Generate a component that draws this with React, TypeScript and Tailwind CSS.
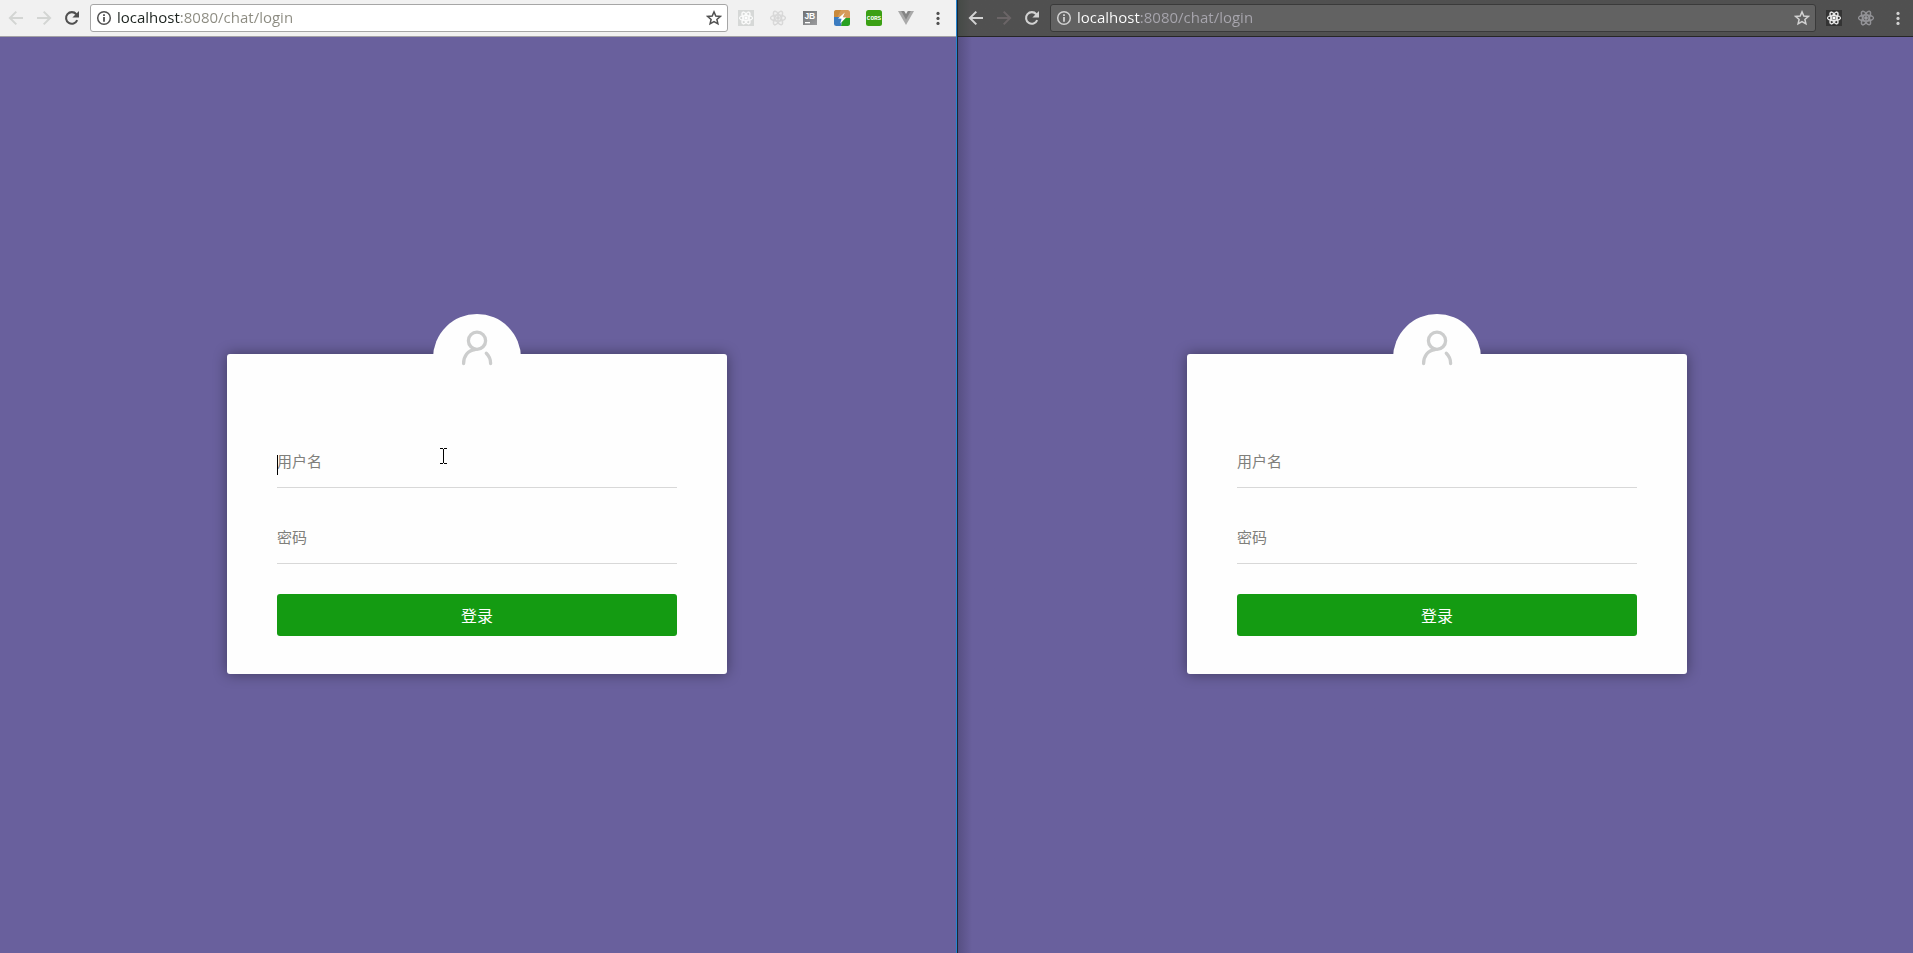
import type { ReactNode } from "react";
import { clsx } from "clsx";
import { SiReact } from "react-icons/si";

type Theme = "light" | "dark";

const ADDRESS = "localhost:8080/chat/login";

function ArrowIcon({ flip = false }: { flip?: boolean }) {
  return (
    <svg viewBox="0 0 16 16" className={clsx("size-4", flip && "-scale-x-100")} fill="none" stroke="currentColor" strokeWidth="2">
      <path d="M15 8H2.5M8.3 1.6 1.9 8l6.4 6.4" />
    </svg>
  );
}

function ReloadIcon() {
  return (
    <svg viewBox="0 0 16 16" className="size-4">
      <path d="M13.2 10.2A5.8 5.8 0 1 1 12.3 4.2" fill="none" stroke="currentColor" strokeWidth="2.1" />
      <path d="M15 1v6.6H8.4z" fill="currentColor" />
    </svg>
  );
}

function InfoIcon() {
  return (
    <svg viewBox="0 0 16 16" className="size-4 shrink-0">
      <circle cx="8" cy="8" r="6.3" fill="none" stroke="currentColor" strokeWidth="1.5" />
      <path d="M7.1 7h1.8v4.7H7.1zM7.1 4.2h1.8v1.7H7.1z" fill="currentColor" />
    </svg>
  );
}

function StarIcon() {
  return (
    <svg viewBox="0 0 16 16" className="size-4">
      <path
        d="M8 1.9l1.8 4.1 4.5.4-3.4 3 1 4.4L8 11.5l-3.9 2.3 1-4.4-3.4-3 4.5-.4z"
        fill="none"
        stroke="currentColor"
        strokeWidth="1.5"
      />
    </svg>
  );
}

function MenuIcon() {
  return (
    <svg viewBox="0 0 16 16" className="size-4" fill="currentColor">
      <circle cx="8" cy="3.4" r="1.6" />
      <circle cx="8" cy="8.4" r="1.6" />
      <circle cx="8" cy="13.4" r="1.6" />
    </svg>
  );
}

function JetBrainsIcon() {
  return (
    <svg viewBox="0 0 16 16" className="size-4">
      <defs>
        <linearGradient id="jb" x1="0" y1="0" x2="1" y2="1">
          <stop offset="0" stopColor="#6f7174" />
          <stop offset="1" stopColor="#9b9c9e" />
        </linearGradient>
      </defs>
      <path d="M1 1h14v14H1z" fill="url(#jb)" />
      <text x="2.4" y="9" fontSize="8.5" fontWeight="700" fontFamily="Liberation Sans, sans-serif" fill="#fff">
        JB
      </text>
      <path d="M3 12h5v1.3H3z" fill="#fff" />
    </svg>
  );
}

function BoltIcon() {
  return (
    <svg viewBox="0 0 16 16" className="size-4">
      <defs>
        <clipPath id="bolt-tile">
          <rect width="16" height="16" rx="2.5" />
        </clipPath>
      </defs>
      <g clipPath="url(#bolt-tile)">
        <path d="M0 0h16v8H0z" fill="#d59a5a" />
        <path d="M0 0h7L3 8H0z" fill="#c98a3c" />
        <path d="M0 7h9L7 16H0z" fill="#3b7cc0" />
        <path d="M9 8h7v8H7z" fill="#27a021" />
        <path d="M10.8 2.6 4 8.6l3.6.1-1.4 4.9 6-6.2-3.4-.1z" fill="#fff" />
      </g>
    </svg>
  );
}

function CorsIcon() {
  return (
    <svg viewBox="0 0 16 16" className="size-4">
      <rect width="16" height="16" rx="2.5" fill="#3ba014" />
      <text x="8" y="10.4" textAnchor="middle" fontSize="6" fontWeight="700" fontFamily="Liberation Mono, monospace" fill="#fff">
        CORS
      </text>
    </svg>
  );
}

function VueIcon() {
  return (
    <svg viewBox="0 0 16 16" className="size-4">
      <path d="M0 1h16L8 15z" fill="#a9a9a9" />
      <path d="M3.2 1h9.6L8 9.4z" fill="#858585" />
      <path d="M6.2 1h3.6L8 4z" fill="#f1f1f1" />
    </svg>
  );
}

function UserIcon() {
  return (
    <svg viewBox="0 0 32 36" className="h-9 w-8" fill="none" stroke="#cccdcd" strokeWidth="3.3" strokeLinecap="round">
      <circle cx="16" cy="10.7" r="8.6" />
      <path d="M2.6 33.5C2.6 26 7 20.3 14 19.6M25.3 23.2c2.8 2.6 4.3 6 4.3 10.3" />
    </svg>
  );
}

function ToolButton({ label, disabled, className, children }: { label: string; disabled?: boolean; className?: string; children: ReactNode }) {
  return (
    <button type="button" aria-label={label} disabled={disabled} className={clsx("size-4 shrink-0", className)}>
      {children}
    </button>
  );
}

function Toolbar({ theme }: { theme: Theme }) {
  const dark = theme === "dark";
  return (
    <header
      className={clsx(
        "flex h-[37px] shrink-0 items-center border-b",
        dark
          ? "border-[#262626] bg-[#505050] bg-linear-to-r from-[#454a46] from-0% to-[#505050] to-[12px] pr-[7px] pl-2.5 text-[#d2d2d2]"
          : "border-[#a3a1a6] bg-[#f1f1f1] pr-2.5 pl-2 text-[#505050]",
      )}
    >
      <nav className="flex items-center gap-3">
        <ToolButton label="Back" disabled={!dark} className={dark ? "" : "text-[#d3d5d3]"}>
          <ArrowIcon />
        </ToolButton>
        <ToolButton label="Forward" disabled className={dark ? "text-[#6b6567]" : "text-[#d3d5d3]"}>
          <ArrowIcon flip />
        </ToolButton>
        <ToolButton label="Reload">
          <ReloadIcon />
        </ToolButton>
      </nav>
      <div
        className={clsx(
          "mr-2.5 ml-2.5 flex h-7 min-w-0 flex-1 items-center gap-[5px] rounded-[3px] border px-[5px]",
          dark ? "border-[#3a3a3a] bg-[#626262]" : "border-[#a6a6a6] bg-white",
        )}
      >
        <InfoIcon />
        <input
          aria-label="Address"
          defaultValue={ADDRESS}
          className={clsx(
            "min-w-0 flex-1 bg-linear-to-r bg-clip-text pb-0.5 font-['Open_Sans','Noto_Sans',sans-serif] text-[15px] leading-5 text-transparent outline-none",
            dark ? "from-white from-[63px] to-[#a8a6ae] to-[63px]" : "from-[#1d2420] from-[63px] to-[#8b8a80] to-[63px]",
          )}
        />
        <ToolButton label="Bookmark this page">
          <StarIcon />
        </ToolButton>
      </div>
      <div className="flex items-center gap-4">
        <ToolButton
          label="React page"
          className={clsx("grid place-items-center", dark ? "bg-[#343434] text-white" : "bg-[#d6d8d7] text-white")}
        >
          <SiReact className="size-3.5 stroke-current stroke-1" />
        </ToolButton>
        <ToolButton label="React tools" className={dark ? "text-[#9a9a9e]" : "text-[#d6d6d6]"}>
          <SiReact className="size-4 stroke-current stroke-1" />
        </ToolButton>
        {!dark && (
          <>
            <ToolButton label="JetBrains">
              <JetBrainsIcon />
            </ToolButton>
            <ToolButton label="Debugger">
              <BoltIcon />
            </ToolButton>
            <ToolButton label="CORS">
              <CorsIcon />
            </ToolButton>
            <ToolButton label="Vue">
              <VueIcon />
            </ToolButton>
          </>
        )}
        <ToolButton label="Menu">
          <MenuIcon />
        </ToolButton>
      </div>
    </header>
  );
}

function Field({ id, type, label, children }: { id: string; type: string; label: string; children?: ReactNode }) {
  return (
    <div className="relative">
      <input
        id={id}
        type={type}
        aria-label={label}
        placeholder={label}
        className="block h-[52px] w-full border-b border-[#d8d8d8] bg-transparent pb-0.5 text-[15px] text-[#333] outline-none placeholder:text-[#7f7f7b]"
      />
      {children}
    </div>
  );
}

function LoginForm({ name, active }: { name: string; active: boolean }) {
  return (
    <form className="flex w-full max-w-[500px] flex-col items-center font-['Noto_Sans_CJK_SC',sans-serif]" onSubmit={(e) => e.preventDefault()}>
      <div className="z-10 -mb-12 flex size-22 justify-center rounded-full bg-[#fefefe] pt-4">
        <UserIcon />
      </div>
      <div className="w-full rounded-[3px] bg-[#fefefe] px-[50px] pt-[82px] pb-[38px] shadow-[0_0_14px_rgba(0,0,0,0.4)]">
        <div className="flex flex-col gap-6">
          <Field id={`${name}-user`} type="text" label="用户名">
            {active && (
              <>
                <span className="absolute top-[19px] left-0 h-5 w-px bg-black" />
                <svg viewBox="0 0 7 16" className="absolute top-3 left-[163px] h-4 w-[7px]" shapeRendering="crispEdges">
                  <path d="M0 0h3v1H0zM4 0h3v1H4zM3 1h1v14H3zM0 15h3v1H0zM4 15h3v1H4z" fill="#000" />
                </svg>
              </>
            )}
          </Field>
          <Field id={`${name}-pass`} type="password" label="密码" />
        </div>
        <button type="submit" className="mt-[30px] block h-[42px] w-full rounded-[3px] bg-[#149b12] text-base text-white">
          登录
        </button>
      </div>
    </form>
  );
}

function BrowserWindow({ theme }: { theme: Theme }) {
  const dark = theme === "dark";
  return (
    <section className="flex min-w-0 flex-col">
      <Toolbar theme={theme} />
      <main
        className={clsx(
          "flex flex-1 items-center justify-center bg-[#69609d] pb-0.5",
          dark ? "bg-linear-to-r from-[#574f83] from-0% to-[#69609d] to-[14px] pl-[3px]" : "pr-0.5",
        )}
      >
        <LoginForm name={theme} active={!dark} />
      </main>
    </section>
  );
}

export default function App() {
  return (
    <div className="grid min-h-screen grid-cols-[1fr_2px_calc(round(down,50%,1px)-1px)]">
      <BrowserWindow theme="light" />
      <div className="border-r border-[#1d2733] bg-[#2484cf]" />
      <BrowserWindow theme="dark" />
    </div>
  );
}
